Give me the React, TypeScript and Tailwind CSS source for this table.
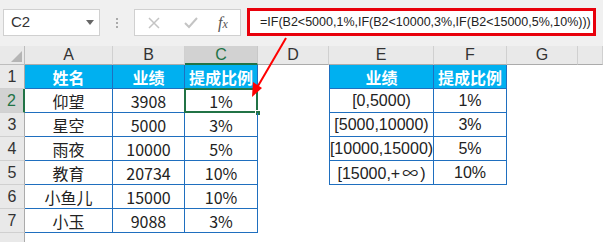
import React from "react";

const cjk = "font-['Noto_Sans_CJK_SC',sans-serif]";
const arial = "font-['Liberation_Sans','Noto_Sans_CJK_SC',sans-serif]";

const letters = ["A", "B", "C", "D", "E", "F", "G", ""];

const left = [
  ["姓名", "业绩", "提成比例"],
  ["仰望", "3908", "1%"],
  ["星空", "5000", "3%"],
  ["雨夜", "10000", "5%"],
  ["教育", "20734", "10%"],
  ["小鱼儿", "15000", "10%"],
  ["小玉", "9088", "3%"],
];

const right = [
  ["业绩", "提成比例"],
  ["[0,5000)", "1%"],
  ["[5000,10000)", "3%"],
  ["[10000,15000)", "5%"],
  ["[15000,+∞)", "10%"],
];

function Cell({ row, col }: { row: number; col: number }) {
  // col: 0=A ... 7=H
  let text = "";
  let cls = "relative flex items-center justify-center text-[16px] text-[#222]";
  if (col <= 2 && row <= 7) {
    text = left[row - 1][col];
    cls += ` ${cjk} border-r border-b border-[#1f6fbf]`;
    if (row === 1) cls += " bg-[#00b0f0] text-white font-bold";
  } else if ((col === 4 || col === 5) && row <= 5) {
    text = right[row - 1][col - 4];
    cls += row === 1 ? ` ${cjk}` : ` ${arial}`;
    cls += " border-r border-b border-[#1f6fbf]";
    if (col === 4) cls += " border-l";
    if (row === 1) cls += " bg-[#00b0f0] text-white font-bold";
  }
  const selected = row === 2 && col === 2;
  return (
    <div className={cls}>
      {text.includes("∞") ? (
        <span>
          [15000,+<span className={`${cjk} px-[2px]`}>∞</span>)
        </span>
      ) : (
        text
      )}
      {selected && (
        <>
          <div className="absolute -left-[1px] -top-[1px] -right-[1px] -bottom-[1px] border-2 border-[#217346]" />
          <div className="absolute -right-[4px] -bottom-[4px] h-[6px] w-[6px] border border-white bg-[#217346]" />
        </>
      )}
    </div>
  );
}

export default function App() {
  const rows = [1, 2, 3, 4, 5, 6, 7, 8];
  return (
    <div className="relative h-[242px] w-[603px] overflow-hidden bg-white">
      {/* formula bar */}
      <div className="flex h-[46px] items-start bg-[#f0f0f0] pt-[8px]">
        <div className={`ml-[3px] mt-[1px] flex h-[27px] w-[97px] items-center justify-between border border-[#d0d0d0] bg-white pl-[7px] pr-[5px] text-[15px] text-[#333] ${arial}`}>
          <span>C2</span>
          <svg width="8" height="5" viewBox="0 0 8 5">
            <path d="M0 0h8L4 5z" fill="#666" />
          </svg>
        </div>
        <div className="mt-[10px] flex w-[34px] flex-col items-center gap-[2px]">
          <div className="h-[2px] w-[2px] bg-[#aaa]" />
          <div className="h-[2px] w-[2px] bg-[#aaa]" />
          <div className="h-[2px] w-[2px] bg-[#aaa]" />
        </div>
        <div className="mt-[1px] flex h-[27px] w-[107px] items-center border border-[#d0d0d0] bg-white">
          <svg className="ml-[13px]" width="12" height="12" viewBox="0 0 12 12">
            <path d="M1 1l10 10M11 1L1 11" stroke="#c4c4c4" strokeWidth="1.5" />
          </svg>
          <svg className="ml-[24px]" width="14" height="12" viewBox="0 0 14 12">
            <path d="M1 6l4 4 8-9" stroke="#c4c4c4" strokeWidth="2" fill="none" />
          </svg>
          <span className="ml-[20px] font-['Liberation_Serif',serif] text-[16px] italic text-[#555]">
            f<span className="text-[12px]">x</span>
          </span>
        </div>
        <div className={`ml-[6px] flex h-[28px] w-[349px] items-center overflow-hidden whitespace-nowrap border-[3px] border-[#e8000b] bg-white pl-[10px] text-[12.5px] text-[#222] ${arial}`}>
          =IF(B2&lt;5000,1%,IF(B2&lt;10000,3%,IF(B2&lt;15000,5%,10%)))
        </div>
      </div>

      {/* sheet */}
      <div className="grid grid-cols-[25px_88px_72px_73px_71px_105px_73px_71px_1fr] grid-rows-[19px_repeat(8,24px)]">
        <div className="relative border-r border-b border-[#bdbdbd] bg-[#e9e9e9]">
          <svg className="absolute bottom-[2px] right-[2px]" width="11" height="11" viewBox="0 0 11 11">
            <path d="M11 0v11H0z" fill="#b5b5b5" />
          </svg>
        </div>
        {letters.map((l, i) =>
          i === 2 ? (
            <div
              key={i}
              className={`flex items-center justify-center border-r border-b-2 border-r-[#c8c8c8] border-b-[#217346] bg-[#d2d2d2] text-[16px] text-[#217346] ${arial}`}
            >
              {l}
            </div>
          ) : (
            <div
              key={i}
              className={`flex items-center justify-center border-r border-b border-r-[#d0d0d0] border-b-[#ababab] bg-[#e9e9e9] text-[16px] text-[#333] ${arial}`}
            >
              {l}
            </div>
          )
        )}
        {rows.map((r) => (
          <React.Fragment key={r}>
            {r === 2 ? (
              <div className={`flex items-center justify-center border-r-2 border-b border-r-[#217346] border-b-[#d0d0d0] bg-[#d2d2d2] text-[16px] text-[#217346] ${arial}`}>
                {r}
              </div>
            ) : (
              <div className={`flex items-center justify-center border-r border-b border-r-[#ababab] border-b-[#d0d0d0] bg-[#e9e9e9] text-[16px] text-[#333] ${arial}`}>
                {r < 8 ? r : ""}
              </div>
            )}
            {letters.map((_, c) => (
              <Cell key={c} row={r} col={c} />
            ))}
          </React.Fragment>
        ))}
      </div>

      {/* arrow */}
      <svg className="pointer-events-none absolute left-0 top-0" width="603" height="242">
        <path d="M286 38L258 86" stroke="#ff0000" strokeWidth="2" />
        <path d="M252 97L253 82L262 88z" fill="#ff0000" />
      </svg>
    </div>
  );
}
